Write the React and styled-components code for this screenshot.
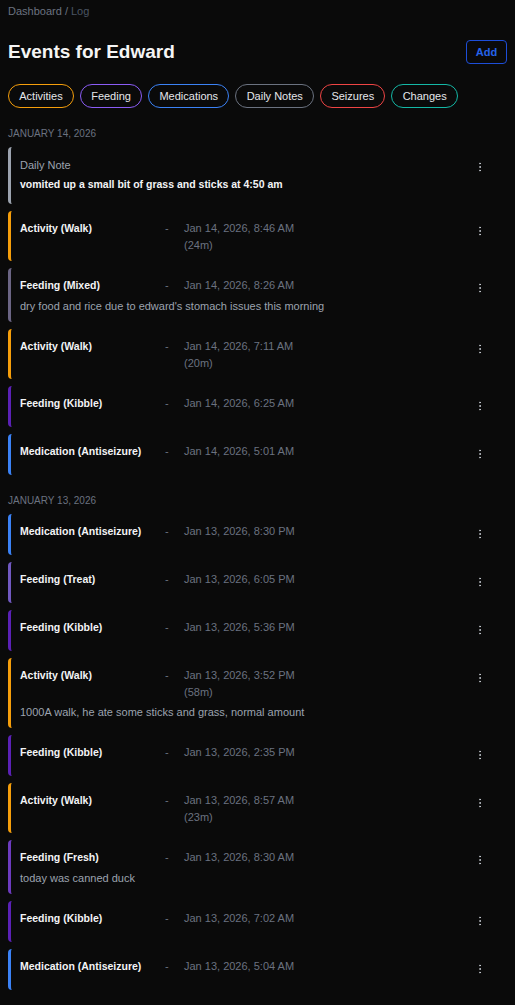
import React from "react";
import styled, { createGlobalStyle } from "styled-components";
import { EllipsisVertical } from "lucide-react";

const GlobalStyle = createGlobalStyle`
  body {
    margin: 0;
    background: #0a0a0a;
    font-family: "Liberation Sans", Arial, sans-serif;
    color: #f3f4f6;
  }
`;

const BAR = {
  note: "#9ca3af",
  walk: "#f59e0b",
  mixed: "#6b6584",
  kibble: "#5b21b6",
  treat: "#7159c1",
  fresh: "#6d3bbf",
  med: "#3b82f6",
};

const filters = [
  { label: "Activities", color: "#f59e0b" },
  { label: "Feeding", color: "#8b5cf6" },
  { label: "Medications", color: "#3b82f6" },
  { label: "Daily Notes", color: "#6b7280" },
  { label: "Seizures", color: "#ef4444" },
  { label: "Changes", color: "#14b8a6" },
];

const days = [
  {
    date: "January 14, 2026",
    events: [
      { kind: "note", bar: BAR.note, text: "vomited up a small bit of grass and sticks at 4:50 am" },
      { title: "Activity (Walk)", bar: BAR.walk, time: "Jan 14, 2026, 8:46 AM", duration: "(24m)" },
      {
        title: "Feeding (Mixed)",
        bar: BAR.mixed,
        time: "Jan 14, 2026, 8:26 AM",
        note: "dry food and rice due to edward's stomach issues this morning",
      },
      { title: "Activity (Walk)", bar: BAR.walk, time: "Jan 14, 2026, 7:11 AM", duration: "(20m)" },
      { title: "Feeding (Kibble)", bar: BAR.kibble, time: "Jan 14, 2026, 6:25 AM" },
      { title: "Medication (Antiseizure)", bar: BAR.med, time: "Jan 14, 2026, 5:01 AM" },
    ],
  },
  {
    date: "January 13, 2026",
    events: [
      { title: "Medication (Antiseizure)", bar: BAR.med, time: "Jan 13, 2026, 8:30 PM" },
      { title: "Feeding (Treat)", bar: BAR.treat, time: "Jan 13, 2026, 6:05 PM" },
      { title: "Feeding (Kibble)", bar: BAR.kibble, time: "Jan 13, 2026, 5:36 PM" },
      {
        title: "Activity (Walk)",
        bar: BAR.walk,
        time: "Jan 13, 2026, 3:52 PM",
        duration: "(58m)",
        note: "1000A walk, he ate some sticks and grass, normal amount",
      },
      { title: "Feeding (Kibble)", bar: BAR.kibble, time: "Jan 13, 2026, 2:35 PM" },
      { title: "Activity (Walk)", bar: BAR.walk, time: "Jan 13, 2026, 8:57 AM", duration: "(23m)" },
      { title: "Feeding (Fresh)", bar: BAR.fresh, time: "Jan 13, 2026, 8:30 AM", note: "today was canned duck" },
      { title: "Feeding (Kibble)", bar: BAR.kibble, time: "Jan 13, 2026, 7:02 AM" },
      { title: "Medication (Antiseizure)", bar: BAR.med, time: "Jan 13, 2026, 5:04 AM" },
    ],
  },
];

const EventCard = ({ ev }) => {
  return (
    <Card $bar={ev.bar}>
      <CardBody>
        {ev.kind === "note" ? (
          <>
            <NoteLabel>Daily Note</NoteLabel>
            <DailyText>{ev.text}</DailyText>
          </>
        ) : (
          <>
            <HeadRow>
              <EventTitle>{ev.title}</EventTitle>
              <Dash>-</Dash>
              <TimeCol>
                <span>{ev.time}</span>
                {ev.duration && <span>{ev.duration}</span>}
              </TimeCol>
            </HeadRow>
            {ev.note && <Note>{ev.note}</Note>}
          </>
        )}
      </CardBody>
      <MenuButton aria-label='More'>
        <EllipsisVertical size={12} strokeWidth={2} />
      </MenuButton>
    </Card>
  );
};

const App = () => {
  return (
    <Page>
      <GlobalStyle />
      <Crumbs>
        <span>Dashboard</span> / <Current>Log</Current>
      </Crumbs>
      <HeaderRow>
        <Title>Events for Edward</Title>
        <AddButton>Add</AddButton>
      </HeaderRow>
      <Filters>
        {filters.map((f) => (
          <Chip key={f.label} $color={f.color}>
            {f.label}
          </Chip>
        ))}
      </Filters>
      {days.map((day) => (
        <Section key={day.date}>
          <DateLabel>{day.date}</DateLabel>
          <CardList>
            {day.events.map((ev, i) => (
              <EventCard key={i} ev={ev} />
            ))}
          </CardList>
        </Section>
      ))}
    </Page>
  );
};

const Page = styled.div`
  padding: 4px 8px 24px;
  min-height: 100vh;
  box-sizing: border-box;
`;

const Crumbs = styled.div`
  font-size: 11px;
  line-height: 14px;
  color: #6b7280;
`;

const Current = styled.span`
  color: #4b5563;
`;

const HeaderRow = styled.div`
  display: flex;
  align-items: center;
  justify-content: space-between;
  margin-top: 22px;
  height: 24px;
`;

const Title = styled.h1`
  margin: 0;
  font-size: 19px;
  font-weight: 700;
  color: #f5f5f5;
  line-height: 22px;
`;

const AddButton = styled.button`
  width: 41px;
  height: 24px;
  background: transparent;
  border: 1px solid #1d4ed8;
  border-radius: 4px;
  color: #2563eb;
  font-family: inherit;
  font-size: 11px;
  font-weight: 700;
  padding: 0;
`;

const Filters = styled.div`
  display: flex;
  gap: 6px;
  margin-top: 20px;
`;

const Chip = styled.button`
  height: 24px;
  padding: 0 10.25px;
  border-radius: 999px;
  border: 1px solid ${(p) => p.$color};
  background: transparent;
  color: #e5e7eb;
  font-family: inherit;
  font-size: 11px;
`;

const Section = styled.section`
  margin-top: 18px;
`;

const DateLabel = styled.div`
  font-size: 10px;
  line-height: 16px;
  text-transform: uppercase;
  color: #6b7280;
  margin-bottom: 5px;
`;

const CardList = styled.div`
  display: flex;
  flex-direction: column;
  gap: 7px;
`;

const Card = styled.div`
  display: flex;
  align-items: flex-start;
  border-left: 3px solid ${(p) => p.$bar};
  border-radius: 4px;
  padding: 8px 15px 8px 9px;
`;

const CardBody = styled.div`
  flex: 1;
  min-width: 0;
  padding-top: 1px;
  margin-bottom: -1px;
`;

const HeadRow = styled.div`
  display: flex;
  align-items: flex-start;
  line-height: 17px;
`;

const EventTitle = styled.div`
  width: 145px;
  flex-shrink: 0;
  font-size: 10.5px;
  font-weight: 700;
  color: #f3f4f6;
`;

const Dash = styled.div`
  width: 19px;
  flex-shrink: 0;
  font-size: 11px;
  color: #6b7280;
`;

const TimeCol = styled.div`
  display: flex;
  flex-direction: column;
  font-size: 11px;
  color: #6b7280;
`;

const Note = styled.div`
  margin-top: 3.5px;
  font-size: 11px;
  line-height: 17px;
  color: #9ca3af;
`;

const NoteLabel = styled.div`
  margin-top: 1px;
  font-size: 11px;
  line-height: 17px;
  color: #9ca3af;
`;

const DailyText = styled.div`
  margin: 2px 0 4px;
  font-size: 10.5px;
  line-height: 17px;
  font-weight: 700;
  color: #f3f4f6;
`;

const MenuButton = styled.button`
  width: 24px;
  height: 25px;
  flex-shrink: 0;
  display: flex;
  align-items: center;
  justify-content: center;
  background: transparent;
  border: none;
  padding: 0 0 1px;
  color: #c4c8cf;
`;

export default App;
